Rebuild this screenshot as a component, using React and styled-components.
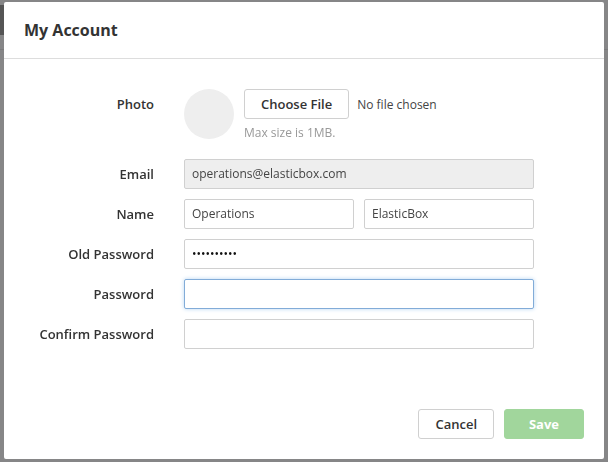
import React, { useState } from "react";
import styled, { createGlobalStyle, css } from "styled-components";

const GlobalStyle = createGlobalStyle`
  *, *::before, *::after { box-sizing: border-box; }
  body {
    margin: 0;
    background: #868687;
    color: #333;
    font: 12px/16px "Open Sans", "Noto Sans", sans-serif;
  }
`;

const PageBehind = styled.div`
  position: fixed;
  inset: 0;
  z-index: 0;
  padding-top: 5px;
`;

const TopBar = styled.div`
  height: 45px;
  border-bottom: 1px solid #7b7b7c;
`;

const MenuBlock = styled.div`
  width: 40px;
  height: 30px;
  background: #555;
`;

const Overlay = styled.div`
  position: relative;
  z-index: 1;
  min-height: 100vh;
  display: flex;
  padding: 2px 4px 3px;
`;

const Dialog = styled.form`
  flex: 1;
  display: flex;
  flex-direction: column;
  background: #fff;
  border-radius: 2px;
`;

const Header = styled.header`
  padding: 16px 20px;
  border-bottom: 1px solid #ddd;
`;

const Title = styled.h1`
  margin: 0;
  font-size: 16px;
  line-height: 24px;
  font-weight: 700;
`;

const Fields = styled.div`
  flex: 1;
  display: flex;
  flex-direction: column;
  gap: 10px;
  padding: 30px 70px 30px 0;
`;

const Row = styled.div`
  display: grid;
  grid-template-columns: 150px 1fr;
  column-gap: 30px;
  min-height: ${(p) => (p.$tall ? "60px" : "30px")};
`;

const Label = styled.label`
  font-size: 13px;
  line-height: 30px;
  font-weight: 600;
  text-align: right;
`;

const NameFields = styled.div`
  display: grid;
  grid-template-columns: 1fr 1fr;
  gap: 10px;
`;

const PhotoField = styled.div`
  display: flex;
  align-items: flex-start;
  gap: 10px;
`;

const Avatar = styled.div`
  width: 50px;
  height: 50px;
  border-radius: 50%;
  background: #eee;
`;

const Upload = styled.div`
  flex: 1;
  min-width: 0;
`;

const Hint = styled.p`
  margin: 6px 0 0;
  color: #999;
`;

const buttonBase = css`
  height: 30px;
  padding: 0 16px;
  border: 1px solid #d0d0d0;
  border-radius: 3px;
  background: #fff;
  color: #333;
  font: 600 13px/28px "Open Sans", "Noto Sans", sans-serif;
`;

const FileInput = styled.input`
  display: block;
  width: 100%;
  height: 30px;
  color: #444;
  font: 12px/30px "Open Sans", "Noto Sans", sans-serif;

  &::file-selector-button {
    ${buttonBase}
    margin: 0 8px 0 0;
  }
`;

const TextInput = styled.input`
  width: 100%;
  min-width: 0;
  height: 30px;
  padding: 0 7px 2px;
  border: 1px solid #d0d0d0;
  border-radius: 2px;
  background: #fff;
  color: #444;
  font: 12px/16px "Open Sans", "Noto Sans", sans-serif;
  outline: none;

  &:read-only { background: #eee; }
  &[type="password"] { color: #111; }

  ${(p) =>
    p.$active &&
    css`
      border-color: #82acd8;
      box-shadow: 0 0 4px #b8d6f2;
    `}
`;

const Footer = styled.footer`
  display: flex;
  justify-content: flex-end;
  gap: 10px;
  padding: 20px;
`;

const Button = styled.button`
  ${buttonBase}
  ${(p) =>
    p.$primary &&
    css`
      min-width: 80px;
      border-color: #a1d69c;
      background: #a1d69c;
      color: #fff;
      font-weight: 700;
    `}
`;

function PasswordRow({ id, label, value, active }) {
  const [text, setText] = useState(value);
  return (
    <Row>
      <Label htmlFor={id}>{label}</Label>
      <TextInput
        id={id}
        type="password"
        value={text}
        $active={active}
        onChange={(e) => setText(e.target.value)}
      />
    </Row>
  );
}

export default function App() {
  return (
    <>
      <GlobalStyle />
      <PageBehind aria-hidden="true">
        <TopBar>
          <MenuBlock />
        </TopBar>
      </PageBehind>
      <Overlay>
        <Dialog
          role="dialog"
          aria-labelledby="account-title"
          onSubmit={(e) => e.preventDefault()}
        >
          <Header>
            <Title id="account-title">My Account</Title>
          </Header>
          <Fields>
            <Row $tall>
              <Label htmlFor="photo">Photo</Label>
              <PhotoField>
                <Avatar />
                <Upload>
                  <FileInput id="photo" type="file" accept="image/*" />
                  <Hint>Max size is 1MB.</Hint>
                </Upload>
              </PhotoField>
            </Row>
            <Row>
              <Label htmlFor="email">Email</Label>
              <TextInput id="email" type="email" readOnly defaultValue="operations@elasticbox.com" />
            </Row>
            <Row>
              <Label htmlFor="first-name">Name</Label>
              <NameFields>
                <TextInput id="first-name" defaultValue="Operations" />
                <TextInput aria-label="Last name" defaultValue="ElasticBox" />
              </NameFields>
            </Row>
            <PasswordRow id="old-password" label="Old Password" value="operations" />
            <PasswordRow id="password" label="Password" value="" active />
            <PasswordRow id="confirm-password" label="Confirm Password" value="" />
          </Fields>
          <Footer>
            <Button type="button">Cancel</Button>
            <Button type="submit" $primary>Save</Button>
          </Footer>
        </Dialog>
      </Overlay>
    </>
  );
}
